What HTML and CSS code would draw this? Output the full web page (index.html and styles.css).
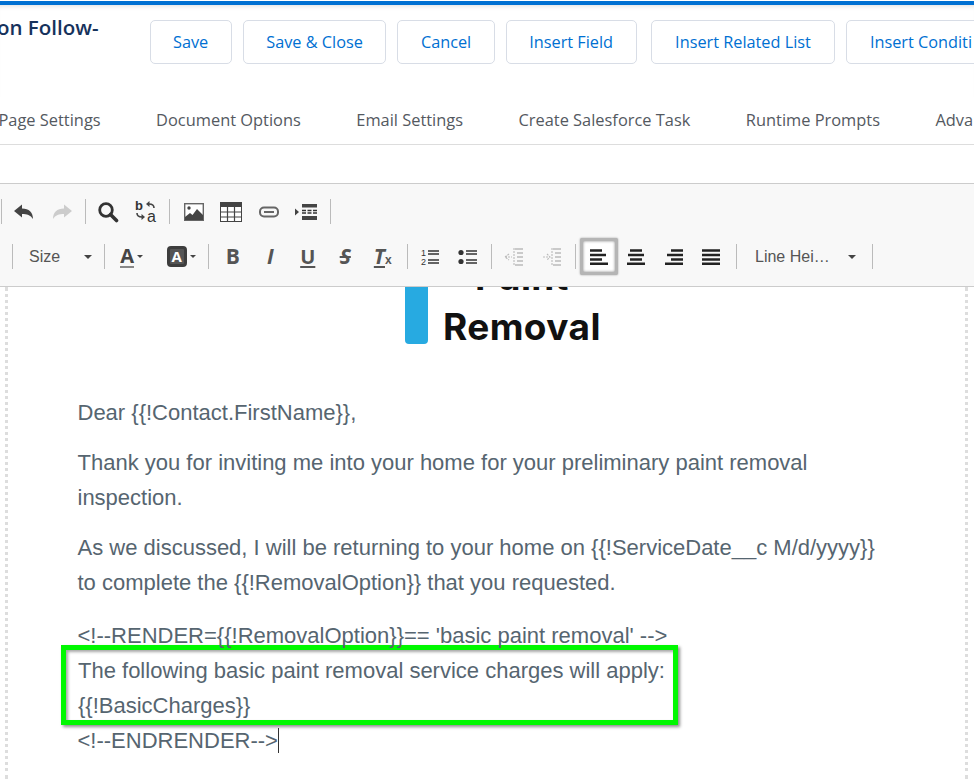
FILE: index.html
```html
<!DOCTYPE html>
<html lang="en">
<head>
<meta charset="utf-8">
<title>Email Template Editor</title>
<link rel="stylesheet" href="styles.css">
</head>
<body>
<div class="page">
  <header class="head">
    <h1 class="title">on Follow-</h1>
    <div class="actions">
      <button class="btn">Save</button>
      <button class="btn">Save &amp; Close</button>
      <button class="btn">Cancel</button>
      <button class="btn">Insert Field</button>
      <button class="btn btn-wide">Insert Related List</button>
      <button class="btn">Insert Conditi</button>
    </div>
  </header>
  <nav class="tabs">
    <span>Page Settings</span>
    <span>Document Options</span>
    <span>Email Settings</span>
    <span>Create Salesforce Task</span>
    <span>Runtime Prompts</span>
    <span>Adva</span>
  </nav>
  <section class="toolbar">
    <div class="row row-one">
      <div class="group">
        <span class="tool"><svg width="22" height="20" viewBox="0 0 22 20"><path class="ink" d="M1 9 9 2.500V6.500C16 6.500 20 10.500 20 17 17.500 13 14 12 9 12V15.500Z"/></svg></span>
        <span class="tool"><svg width="22" height="20" viewBox="0 0 22 20"><path class="ink-off" d="M21 9 13 2.500V6.500C6 6.500 2 10.500 2 17 4.500 13 8 12 13 12V15.500Z"/></svg></span>
      </div>
      <div class="group">
        <span class="tool"><svg width="22" height="22" viewBox="0 0 22 22"><circle cx="9" cy="9" r="6.300" fill="none" stroke="#333" stroke-width="2.800"/><path d="M13.500 13.500 19.500 19.500" stroke="#333" stroke-width="3.600" stroke-linecap="round"/></svg></span>
        <span class="tool"><svg width="24" height="25" viewBox="0 0 24 25"><text class="glyph-b" x="1" y="11">b</text><text class="glyph-a" x="13" y="23">a</text><path d="M20 9C20 6 18 5 15 5" fill="none" stroke="#444" stroke-width="1.600"/><path d="M12 5 15.500 2V8Z" fill="#444"/><path d="M3 14C3 17 5 18 8 18" fill="none" stroke="#444" stroke-width="1.600"/><path d="M11 18 7.500 15V21Z" fill="#444"/></svg></span>
      </div>
      <div class="group group-four">
        <span class="tool"><svg width="20" height="18" viewBox="0 0 20 18"><rect x=".7" y=".7" width="18.600" height="16.600" fill="#fff" stroke="#666" stroke-width="1.400"/><circle cx="5" cy="5" r="1.700" fill="#444"/><path class="ink" d="M1 17V14L6 10 8.500 12 13 6 19 12V17Z"/></svg></span>
        <span class="tool"><svg width="22" height="20" viewBox="0 0 22 20"><rect x=".5" y=".5" width="21" height="19" fill="#fff" stroke="#444"/><rect width="22" height="5" fill="#444"/><path d="M7.500 5V19M14.500 5V19M1 10H21M1 15H21" stroke="#444" stroke-width="1.200"/></svg></span>
        <span class="tool"><svg width="20" height="12" viewBox="0 0 20 12"><rect x="1" y="1.500" width="18" height="9" rx="4" fill="none" stroke="#666" stroke-width="2"/><path d="M5 6H15" stroke="#666" stroke-width="2"/></svg></span>
        <span class="tool"><svg width="22" height="16" viewBox="0 0 22 16"><path class="ink" d="M0 4.500 4 8 0 11.500ZM7 0H22V3.500H7ZM7 12H22V16H7Z"/><path d="M7 6.500H22M7 9H22" stroke="#333" stroke-width="1.300" stroke-dasharray="4 1.500"/></svg></span>
      </div>
    </div>
    <div class="row row-two">
      <div class="group select select-size"><span>Size</span><i class="caret"></i></div>
      <div class="group group-color">
        <span class="tool tool-wide"><span class="letter letter-color">A</span><i class="caret caret-sm"></i></span>
        <span class="tool tool-wide"><span class="letter letter-back">A</span><i class="caret caret-sm"></i></span>
      </div>
      <div class="group group-five">
        <span class="tool"><span class="letter">B</span></span>
        <span class="tool"><span class="letter letter-i">I</span></span>
        <span class="tool"><span class="letter letter-u">U</span></span>
        <span class="tool"><span class="letter letter-s">S</span></span>
        <span class="tool"><span class="letter letter-tx"><u>T</u><small>x</small></span></span>
      </div>
      <div class="group">
        <span class="tool"><svg width="20" height="18" viewBox="0 0 20 18"><text class="glyph-n" x="1" y="8">1</text><text class="glyph-n" x="1" y="17">2</text><path d="M8 3H19M8 6H19M8 12H19M8 15H19" stroke="#333" stroke-width="1.500"/></svg></span>
        <span class="tool"><svg width="20" height="16" viewBox="0 0 20 16"><circle cx="3" cy="3.500" r="2.600" fill="#333"/><circle cx="3" cy="12.500" r="2.600" fill="#333"/><path d="M8 2H19M8 5H19M8 11H19M8 14H19" stroke="#333" stroke-width="1.500"/></svg></span>
      </div>
      <div class="group">
        <span class="tool"><svg width="20" height="20" viewBox="0 0 20 20"><path d="M11 2H19M13 6H19M13 10H19M13 14H19M11 18H19" stroke="#bbb" stroke-width="1.300"/><path d="M1 10H8M5 7 1 10 5 13M10 1V19" fill="none" stroke="#bbb" stroke-width="1.100" stroke-dasharray="2 1"/></svg></span>
        <span class="tool"><svg width="20" height="20" viewBox="0 0 20 20"><path d="M11 2H19M13 6H19M13 10H19M13 14H19M11 18H19" stroke="#bbb" stroke-width="1.300"/><path d="M1 10H8M5 7 8 10 5 13M10 1V19" fill="none" stroke="#bbb" stroke-width="1.100" stroke-dasharray="2 1"/></svg></span>
      </div>
      <div class="group group-align">
        <span class="tool tool-on"><svg width="18" height="16" viewBox="0 0 18 16"><path d="M0 1.500H12M0 6H16M0 10.500H12M0 14.700H18" stroke="#222" stroke-width="2.500"/></svg></span>
        <span class="tool"><svg width="18" height="16" viewBox="0 0 18 16"><path d="M3 1.500H15M1 6H17M3 10.500H15M0 14.700H18" stroke="#222" stroke-width="2.500"/></svg></span>
        <span class="tool"><svg width="18" height="16" viewBox="0 0 18 16"><path d="M6 1.500H18M2 6H18M6 10.500H18M0 14.700H18" stroke="#222" stroke-width="2.500"/></svg></span>
        <span class="tool"><svg width="18" height="16" viewBox="0 0 18 16"><path d="M0 1.500H18M0 6H18M0 10.500H18M0 14.700H18" stroke="#222" stroke-width="2.500"/></svg></span>
      </div>
      <div class="group select select-line"><span>Line Hei…</span><i class="caret"></i></div>
    </div>
  </section>
  <main class="editor">
    <div class="logo">
      <div class="logo-bar"></div>
      <div class="logo-text"><div>Paint</div><div>Removal</div></div>
    </div>
    <div class="copy">
      <p>Dear {{!Contact.FirstName}},</p>
      <p>Thank you for inviting me into your home for your preliminary paint removal inspection.</p>
      <p class="para-last">As we discussed, I will be returning to your home on {{!ServiceDate__c M/d/yyyy}} to complete the {{!RemovalOption}} that you requested.</p>
      <p class="para-tight">&lt;!--RENDER={{!RemovalOption}}== 'basic paint removal' --&gt;</p>
      <div class="mark">The following basic paint removal service charges will apply:<br>{{!BasicCharges}}</div>
      <p><span class="cursor">&lt;!--ENDRENDER--&gt;</span></p>
    </div>
  </main>
</div>
</body>
</html>
```

FILE: styles.css
```css
* { box-sizing: border-box; }
html, body { margin: 0; padding: 0; background: #fff; }
.page {
  width: 974px;
  height: 779px;
  overflow: hidden;
  border-top: 1px solid #fff;
  font-family: "Open Sans", sans-serif;
}
.head {
  height: 96px;
  border-top: 4px solid #0070d2;
  box-shadow: inset 0 5px 5px -4px #ddd;
  display: flex;
  align-items: flex-start;
}
.title {
  margin: 7px 0 0 -3px;
  width: 153px;
  flex: none;
  font-size: 20.500px;
  line-height: 30px;
  font-weight: 600;
  color: #16325c;
  white-space: nowrap;
}
.actions { display: flex; gap: 11px; margin-top: 15px; margin-left: -.5px; flex: none; }
.btn {
  height: 44px;
  padding: 0 22.500px 1px;
  background: #fff;
  border: 1px solid #d8dde6;
  border-radius: 5px;
  color: #0070d2;
  font: 400 16.300px "Open Sans", sans-serif;
  white-space: nowrap;
  flex: none;
}
.btn-wide { margin-left: 3px; padding: 0 23.500px 1px; }
.tabs {
  height: 48px;
  padding-top: 13px;
  border-bottom: 1px solid #ddd;
  display: flex;
  gap: 55.500px;
  margin-left: -1.500px;
  width: 1100px;
  font-size: 16.400px;
  line-height: 20px;
  color: #54595f;
  white-space: nowrap;
}
.toolbar {
  margin-top: 38px;
  height: 104px;
  background: #f8f8f8;
  border-top: 1px solid #ccc;
  border-bottom: 1px solid #ccc;
  padding-top: 15px;
}
.row { display: flex; height: 25px; }
.row-one { margin-left: 1px; }
.row-two { margin-top: 20px; margin-left: 12px; }
.group {
  display: flex;
  align-items: center;
  padding: 0 4.500px 0 3.500px;
  border-right: 1px solid #bbb;
  flex: none;
}
.row-one .group:first-child { border-left: 1px solid #bbb; }
.row-two .group:first-child { border-left: 1px solid #bbb; }
.group-four { padding: 0 5px; }
.group-five { padding: 0 5.500px 0 5px; }
.group-align { padding: 0 6px 0 4px; }
.group-color { padding: 0 1px 0 2px; width: 104px; }
.tool {
  width: 37.500px;
  height: 25px;
  display: flex;
  align-items: center;
  justify-content: center;
  flex: none;
}
.tool-wide { width: 49.500px; gap: 3px; }
.tool-on {
  height: 37px;
  background: #fff;
  border: 3px solid #b5b5b5;
  border-radius: 2px;
  box-shadow: inset 0 0 3px #888, 0 0 2px #999;
}
.select {
  justify-content: space-between;
  font: 400 16px "Liberation Sans", Arial, sans-serif;
  color: #555;
}
.select-size { width: 93px; padding: 0 12px 0 16px; }
.select-line { width: 136px; padding: 0 16px 0 18px; }
.caret {
  width: 0;
  height: 0;
  border-left: 4.500px solid transparent;
  border-right: 4.500px solid transparent;
  border-top: 4.500px solid #444;
}
.caret-sm { border-left-width: 3.500px; border-right-width: 3.500px; border-top-width: 3.500px; }
.ink { fill: #444; }
.ink-off { fill: #ccc; }
.glyph-b { font: 700 13px "Liberation Sans", sans-serif; fill: #333; }
.glyph-a { font: 400 16px "Liberation Sans", sans-serif; fill: #333; }
.glyph-n { font: 400 9px "Liberation Sans", sans-serif; fill: #333; }
.letter {
  font: 700 21px/1 "Open Sans", sans-serif;
  color: #555;
}
.letter-color { border-bottom: 2px solid #888; line-height: 20px; color: #444; font-size: 20px; }
.letter-back {
  width: 20px;
  height: 21px;
  border: 3px solid #3d3d3d;
  border-radius: 4px;
  background: #555;
  color: #fff;
  font-size: 15px;
  line-height: 15px;
  text-align: center;
}
.letter-i { font-style: italic; }
.letter-u { text-decoration: underline; text-underline-offset: 2px; font-size: 20px; }
.letter-s { text-decoration: line-through; font-style: italic; }
.letter-tx { font-style: italic; }
.letter-tx u { text-underline-offset: 2px; }
.letter-tx small { font: 700 12px "Liberation Sans", sans-serif; }
.editor {
  height: 492px;
  margin: 0 6px 0 5px;
  border-left: 3px dotted #ddd;
  border-right: 3px dotted #ddd;
  overflow: hidden;
}
.logo {
  display: flex;
  margin: -35px 0 0 397px;
  gap: 15px;
}
.logo-bar {
  width: 23px;
  height: 92px;
  background: #27aae1;
  border-radius: 4px;
  flex: none;
}
.logo-text {
  font: 700 37px/50px Inter, sans-serif;
  color: #111;
  text-align: center;
  letter-spacing: .4px;
}
.copy {
  margin: 43px 0 0 69.500px;
  width: 810px;
  font: 400 22px/35px "Liberation Sans", Arial, sans-serif;
  color: #566570;
}
.copy p { margin: 0 0 15px; }
.copy .para-last { margin-bottom: 18px; }
.copy .para-tight { margin-bottom: 0; }
.mark {
  width: 617px;
  height: 80px;
  margin: -8.500px 0 -1.500px -16.500px;
  padding: 3.500px 0 0 12px;
  border: 5px solid #00f800;
  box-shadow: 2px 2px 3px rgba(0,0,0,.45), inset 2px 2px 3px rgba(0,0,0,.35);
  white-space: nowrap;
}
.cursor { border-right: 1px solid #333; }
```
